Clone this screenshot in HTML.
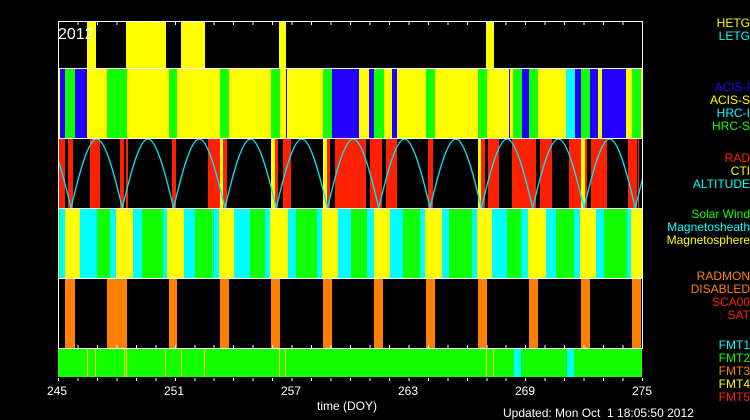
<!DOCTYPE html>
<html><head><meta charset="utf-8"><style>
body{margin:0;background:#000;width:750px;height:420px;overflow:hidden;position:relative;font-family:"Liberation Sans",sans-serif}
.p{position:absolute;left:0;width:750px}
.p i{position:absolute;top:0;bottom:0;display:block}
.y{background:#ffff00}.b{background:#2200ff}.g{background:#11ff00}.c{background:#00ffff}.r{background:#ff2000}.o{background:#ff8000}
.t{position:absolute;font-size:12px;line-height:13px;white-space:pre}
.lg{position:absolute;right:0;text-align:right;font-size:12px;line-height:13px}
.hl{position:absolute;left:58px;width:585px;height:1px;background:#fff}
.tk{position:absolute;left:58px;width:586px;height:3px;background:repeating-linear-gradient(90deg,#fff 0 1px,transparent 1px 19.467px)}
</style></head><body>

<!-- grating -->
<div class="p" style="top:21px;height:47px">
<i class="y" style="left:87px;width:9px"></i><i class="y" style="left:126px;width:40px"></i><i class="y" style="left:181px;width:24px"></i><i class="y" style="left:279px;width:7px"></i><i class="y" style="left:486px;width:8px"></i>
</div>
<!-- instrument -->
<div class="p" style="top:69px;height:69px">
<i class="y" style="left:58px;width:2px"></i><i class="b" style="left:60px;width:5px"></i><i class="g" style="left:65px;width:10px"></i><i class="b" style="left:75px;width:12px"></i><i class="y" style="left:87px;width:20px"></i><i class="g" style="left:107px;width:20px"></i><i class="y" style="left:127px;width:42px"></i><i class="g" style="left:169px;width:8px"></i><i class="y" style="left:177px;width:43px"></i><i class="g" style="left:220px;width:9px"></i><i class="y" style="left:229px;width:42px"></i><i class="g" style="left:271px;width:9px"></i><i class="y" style="left:280px;width:6px"></i><i class="b" style="left:286px;width:1px"></i><i class="y" style="left:287px;width:36px"></i><i class="g" style="left:323px;width:9px"></i><i class="b" style="left:332px;width:27px"></i><i class="y" style="left:359px;width:10px"></i><i class="b" style="left:369px;width:5px"></i><i class="g" style="left:374px;width:10px"></i><i class="y" style="left:384px;width:8px"></i><i class="b" style="left:392px;width:5px"></i><i class="y" style="left:397px;width:29px"></i><i class="g" style="left:426px;width:9px"></i><i class="y" style="left:435px;width:43px"></i><i class="g" style="left:478px;width:9px"></i><i class="y" style="left:487px;width:22px"></i><i class="b" style="left:509px;width:1px"></i><i class="y" style="left:510px;width:3px"></i><i class="g" style="left:513px;width:9px"></i><i class="b" style="left:522px;width:7px"></i><i class="g" style="left:529px;width:9px"></i><i class="y" style="left:538px;width:28px"></i><i class="c" style="left:566px;width:9px"></i><i class="b" style="left:575px;width:6px"></i><i class="g" style="left:581px;width:9px"></i><i class="b" style="left:590px;width:8px"></i><i class="y" style="left:598px;width:4px"></i><i class="b" style="left:602px;width:24px"></i><i class="y" style="left:626px;width:6px"></i><i class="g" style="left:632px;width:9px"></i><i class="y" style="left:641px;width:1px"></i>
</div>
<!-- radiation -->
<div class="p" style="top:139px;height:69px">
<i class="r" style="left:58px;width:7px"></i><i class="r" style="left:68px;width:5px"></i><i class="r" style="left:90px;width:10px"></i><i class="r" style="left:120px;width:4px"></i><i class="r" style="left:126px;width:2px"></i><i class="r" style="left:172px;width:4px"></i><i class="r" style="left:208px;width:12px"></i><i class="y" style="left:220px;width:3px"></i><i class="r" style="left:223px;width:4px"></i><i class="y" style="left:271px;width:4px"></i><i class="r" style="left:275px;width:3px"></i><i class="r" style="left:283px;width:8px"></i><i class="y" style="left:323px;width:4px"></i><i class="r" style="left:327px;width:3px"></i><i class="r" style="left:335px;width:31px"></i><i class="r" style="left:370px;width:12px"></i><i class="r" style="left:386px;width:11px"></i><i class="r" style="left:428px;width:5px"></i><i class="y" style="left:478px;width:3px"></i><i class="r" style="left:481px;width:4px"></i><i class="r" style="left:488px;width:11px"></i><i class="r" style="left:512px;width:24px"></i><i class="r" style="left:540px;width:12px"></i><i class="r" style="left:569px;width:12px"></i><i class="y" style="left:581px;width:4px"></i><i class="r" style="left:585px;width:2px"></i><i class="r" style="left:591px;width:16px"></i><i class="r" style="left:628px;width:9px"></i><i class="r" style="left:638px;width:1px"></i>
</div>
<!-- zones -->
<div class="p" style="top:209px;height:69px">
<i class="g" style="left:58px;width:2px"></i><i class="c" style="left:60px;width:5px"></i><i class="y" style="left:65px;width:15px"></i><i class="c" style="left:80px;width:17px"></i><i class="g" style="left:97px;width:13px"></i><i class="c" style="left:110px;width:6px"></i><i class="y" style="left:116px;width:17px"></i><i class="c" style="left:133px;width:9px"></i><i class="g" style="left:142px;width:21px"></i><i class="c" style="left:163px;width:4px"></i><i class="y" style="left:167px;width:17px"></i><i class="c" style="left:184px;width:11px"></i><i class="g" style="left:195px;width:17px"></i><i class="c" style="left:212px;width:1px"></i><i class="g" style="left:213px;width:1px"></i><i class="c" style="left:214px;width:5px"></i><i class="y" style="left:219px;width:15px"></i><i class="c" style="left:234px;width:16px"></i><i class="g" style="left:250px;width:15px"></i><i class="c" style="left:265px;width:5px"></i><i class="y" style="left:270px;width:18px"></i><i class="c" style="left:288px;width:8px"></i><i class="g" style="left:296px;width:21px"></i><i class="c" style="left:317px;width:5px"></i><i class="y" style="left:322px;width:16px"></i><i class="c" style="left:338px;width:13px"></i><i class="g" style="left:351px;width:16px"></i><i class="c" style="left:367px;width:7px"></i><i class="y" style="left:374px;width:16px"></i><i class="c" style="left:390px;width:13px"></i><i class="g" style="left:403px;width:17px"></i><i class="c" style="left:420px;width:5px"></i><i class="y" style="left:425px;width:17px"></i><i class="c" style="left:442px;width:7px"></i><i class="g" style="left:449px;width:23px"></i><i class="c" style="left:472px;width:5px"></i><i class="y" style="left:477px;width:15px"></i><i class="c" style="left:492px;width:15px"></i><i class="g" style="left:507px;width:14px"></i><i class="c" style="left:521px;width:7px"></i><i class="y" style="left:528px;width:18px"></i><i class="c" style="left:546px;width:10px"></i><i class="g" style="left:556px;width:18px"></i><i class="c" style="left:574px;width:6px"></i><i class="y" style="left:580px;width:16px"></i><i class="c" style="left:596px;width:8px"></i><i class="g" style="left:604px;width:23px"></i><i class="c" style="left:627px;width:4px"></i><i class="y" style="left:631px;width:11px"></i>
</div>
<!-- radmon -->
<div class="p" style="top:279px;height:69px">
<i class="o" style="left:65px;width:10px"></i><i class="o" style="left:107px;width:20px"></i><i class="o" style="left:169px;width:8px"></i><i class="o" style="left:220px;width:9px"></i><i class="o" style="left:271px;width:9px"></i><i class="o" style="left:323px;width:9px"></i><i class="o" style="left:374px;width:9px"></i><i class="o" style="left:426px;width:9px"></i><i class="o" style="left:478px;width:9px"></i><i class="o" style="left:529px;width:9px"></i><i class="o" style="left:581px;width:9px"></i><i class="o" style="left:632px;width:9px"></i>
</div>
<!-- fmt -->
<div class="p" style="top:349px;height:28px">
<i class="g" style="left:58px;width:584px"></i>
<i class="y" style="left:87px;width:1px"></i><i class="y" style="left:95px;width:1px"></i><i class="y" style="left:124px;width:1px"></i><i class="y" style="left:126px;width:1px"></i><i class="y" style="left:165px;width:1px"></i><i class="y" style="left:181px;width:1px"></i><i class="y" style="left:204px;width:1px"></i><i class="y" style="left:279px;width:1px"></i><i class="y" style="left:285px;width:1px"></i><i class="y" style="left:486px;width:1px"></i><i class="y" style="left:493px;width:1px"></i><i class="c" style="left:514px;width:7px"></i><i class="c" style="left:567px;width:7px"></i>
</div>

<svg style="position:absolute;left:0;top:0" width="750" height="420">
<defs><clipPath id="k"><rect x="58" y="139" width="584" height="69"/></clipPath></defs>
<path clip-path="url(#k)" fill="none" stroke="#00e8ff" stroke-width="1.3" d="M19.7,208 c8.36,-35.3 17.29,-69 25.65,-69 c8.36,0 17.29,33.7 25.65,69 c8.36,-35.3 17.29,-69 25.65,-69 c8.36,0 17.29,33.7 25.65,69 c8.36,-35.3 17.29,-69 25.65,-69 c8.36,0 17.29,33.7 25.65,69 c8.36,-35.3 17.29,-69 25.65,-69 c8.36,0 17.29,33.7 25.65,69 c8.36,-35.3 17.29,-69 25.65,-69 c8.36,0 17.29,33.7 25.65,69 c8.36,-35.3 17.29,-69 25.65,-69 c8.36,0 17.29,33.7 25.65,69 c8.36,-35.3 17.29,-69 25.65,-69 c8.36,0 17.29,33.7 25.65,69 c8.36,-35.3 17.29,-69 25.65,-69 c8.36,0 17.29,33.7 25.65,69 c8.36,-35.3 17.29,-69 25.65,-69 c8.36,0 17.29,33.7 25.65,69 c8.36,-35.3 17.29,-69 25.65,-69 c8.36,0 17.29,33.7 25.65,69 c8.36,-35.3 17.29,-69 25.65,-69 c8.36,0 17.29,33.7 25.65,69 c8.36,-35.3 17.29,-69 25.65,-69 c8.36,0 17.29,33.7 25.65,69 c8.36,-35.3 17.29,-69 25.65,-69 c8.36,0 17.29,33.7 25.65,69 c8.36,-35.3 17.29,-69 25.65,-69 c8.36,0 17.29,33.7 25.65,69"/>
</svg>

<!-- frame -->
<div class="hl" style="top:21px"></div>
<div class="hl" style="top:68px"></div>
<div class="hl" style="top:138px"></div>
<div class="hl" style="top:208px"></div>
<div class="hl" style="top:278px"></div>
<div class="hl" style="top:348px"></div>
<div style="position:absolute;left:58px;top:21px;width:1px;height:328px;background:#fff"></div>
<div style="position:absolute;left:642px;top:21px;width:1px;height:328px;background:#fff"></div>
<div class="tk" style="top:22px"></div>
<div class="tk" style="top:345px"></div>
<div class="tk" style="top:378px"></div>

<div class="t" style="left:58px;top:28px;font-size:16px;color:#fff">2012</div>

<div class="t" style="left:47px;top:385px;color:#fff">245</div>
<div class="t" style="left:164px;top:385px;color:#fff">251</div>
<div class="t" style="left:281px;top:385px;color:#fff">257</div>
<div class="t" style="left:398px;top:385px;color:#fff">263</div>
<div class="t" style="left:515px;top:385px;color:#fff">269</div>
<div class="t" style="left:632px;top:385px;color:#fff">275</div>
<div class="t" style="left:317px;top:400px;color:#fff">time (DOY)</div>
<div class="t" style="left:503px;top:407px;color:#fff">Updated: Mon Oct  1 18:05:50 2012</div>

<div class="lg" style="top:17px;color:#ffff00">HETG</div>
<div class="lg" style="top:30px;color:#00ffff">LETG</div>
<div class="lg" style="top:81px;color:#2200ff">ACIS-I</div>
<div class="lg" style="top:94px;color:#ffff00">ACIS-S</div>
<div class="lg" style="top:107px;color:#00ffff">HRC-I</div>
<div class="lg" style="top:120px;color:#11ff00">HRC-S</div>
<div class="lg" style="top:152px;color:#ff2000">RAD</div>
<div class="lg" style="top:165px;color:#ffff00">CTI</div>
<div class="lg" style="top:178px;color:#00ffff">ALTITUDE</div>
<div class="lg" style="top:208px;color:#11ff00">Solar Wind</div>
<div class="lg" style="top:221px;color:#00ffff">Magnetosheath</div>
<div class="lg" style="top:234px;color:#ffff00">Magnetosphere</div>
<div class="lg" style="top:270px;color:#ff8000">RADMON</div>
<div class="lg" style="top:283px;color:#ff8000">DISABLED</div>
<div class="lg" style="top:296px;color:#ff2000">SCA00</div>
<div class="lg" style="top:309px;color:#ff2000">SAT</div>
<div class="lg" style="top:339px;color:#00ffff">FMT1</div>
<div class="lg" style="top:352px;color:#11ff00">FMT2</div>
<div class="lg" style="top:365px;color:#ff8000">FMT3</div>
<div class="lg" style="top:378px;color:#ffff00">FMT4</div>
<div class="lg" style="top:391px;color:#ff2000">FMT5</div>
</body></html>
